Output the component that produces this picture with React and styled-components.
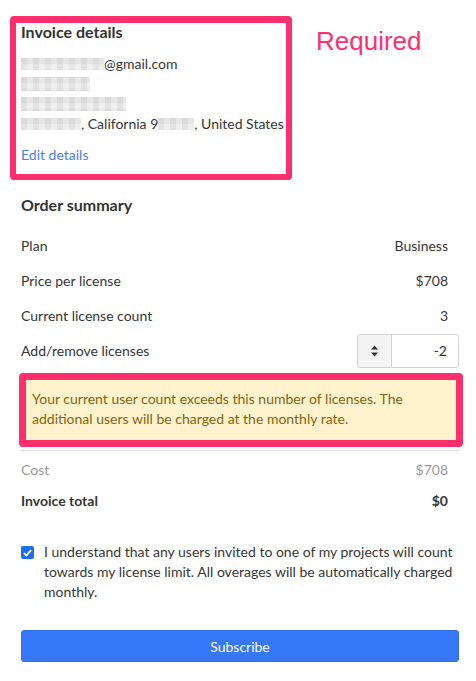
import React from "react";
import styled, { createGlobalStyle } from "styled-components";

const GlobalStyle = createGlobalStyle`
  html, body {
    margin: 0;
    padding: 0;
    background: #fff;
  }
  body {
    font-family: Lato, "Open Sans", sans-serif;
    color: #363636;
    font-size: 14px;
  }
`;

const Page = styled.div`
  width: 476px;
  box-sizing: border-box;
  padding: 16px 17px 0 21px;
`;

const TopRow = styled.div`
  display: flex;
  align-items: flex-start;
`;

const Highlight = styled.div`
  border: 6px solid #ff2f6d;
  border-top-width: 7px;
  border-radius: 4px;
  background: #fff;
`;

const InvoiceBox = styled(Highlight)`
  margin-left: -11px;
  padding: 0 0 9px 5px;
  box-sizing: content-box;
  width: 265px;
`;

const Required = styled.div`
  font-family: "Liberation Sans", Arial, sans-serif;
  font-size: 26px;
  color: #ff2f6d;
  margin: 10px 0 0 24px;
  line-height: 30px;
`;

const Title = styled.h2`
  margin: ${(p) => p.$top || 0}px 0 0;
  font-size: 16px;
  font-weight: 700;
  line-height: 22px;
  color: #333;
`;

const Lines = styled.div`
  margin-top: 11px;
  line-height: 20px;
`;

const Line = styled.div`
  display: flex;
  align-items: center;
  height: 20px;
  white-space: nowrap;
`;

const Redacted = styled.span`
  display: inline-block;
  width: ${(p) => p.$w}px;
  height: ${(p) => p.$h || 12}px;
  background-color: #e6e6e6;
  background-image:
    linear-gradient(90deg, rgba(0,0,0,0.05) 50%, transparent 50%),
    linear-gradient(0deg, rgba(255,255,255,0.35) 50%, transparent 50%);
  background-size: 12px 12px, 12px 12px;
`;

const Link = styled.a`
  display: block;
  margin-top: 11px;
  line-height: 20px;
  color: #4b7cf3;
  text-decoration: none;
`;

const Summary = styled.div`
  margin-top: 14px;
`;

const Rows = styled.div`
  margin-top: 12px;
`;

const Row = styled.div`
  display: flex;
  justify-content: space-between;
  align-items: center;
  height: ${(p) => p.$h || 35}px;
  padding-right: ${(p) => (p.$flush ? 0 : 11)}px;
  color: ${(p) => (p.$muted ? "#9a9a9a" : "#363636")};
  font-weight: ${(p) => (p.$bold ? 700 : 400)};
`;

const Stepper = styled.div`
  display: flex;
  width: 102px;
  height: 34px;
  box-sizing: border-box;
  border: 1px solid #d2d2d2;
  border-radius: 3px;
  overflow: hidden;
`;

const StepButton = styled.div`
  width: 33px;
  flex-shrink: 0;
  background: #f4f4f5;
  border-right: 1px solid #d2d2d2;
  display: flex;
  align-items: center;
  justify-content: center;
`;

const StepValue = styled.div`
  flex: 1;
  text-align: right;
  padding-right: 11px;
  line-height: 32px;
  color: #333;
`;

const AlertBox = styled(Highlight)`
  margin: 5px -4px 0 -2px;
  border-width: 7px;
  border-radius: 4px;
  background: #fff3cd;
  color: #85650f;
  line-height: 20px;
  padding: 9px 6px 11px 6px;
`;

const Divider = styled.hr`
  border: none;
  border-top: 1px solid #dcdcdc;
  margin: 3px 0 3px;
`;

const Agree = styled.label`
  display: flex;
  align-items: flex-start;
  gap: 10px;
  margin-top: 26px;
  line-height: 20px;
  color: #363636;
`;

const Check = styled.span`
  flex-shrink: 0;
  width: 13px;
  height: 13px;
  margin-top: 4px;
  border-radius: 2px;
  background: #1a6ff5;
  display: flex;
  align-items: center;
  justify-content: center;
`;

const SubscribeButton = styled.button`
  display: block;
  width: 100%;
  height: 32px;
  margin-top: 28px;
  border: 1px solid #2e6ff0;
  border-radius: 3px;
  background: #3777fa;
  color: #fff;
  font-family: Lato, "Open Sans", sans-serif;
  font-size: 14px;
`;

export default function App() {
  return (
    <>
      <GlobalStyle />
      <Page>
        <TopRow>
          <InvoiceBox>
            <Title $top={-2}>Invoice details</Title>
            <Lines>
              <Line>
                <Redacted $w={83} />@gmail.com
              </Line>
              <Line>
                <Redacted $w={69} $h={14} />
              </Line>
              <Line>
                <Redacted $w={105} $h={14} />
              </Line>
              <Line>
                <Redacted $w={60} />, California 9<Redacted $w={36} />, United States
              </Line>
            </Lines>
            <Link href="#">Edit details</Link>
          </InvoiceBox>
          <Required>Required</Required>
        </TopRow>

        <Summary>
          <Title>Order summary</Title>
          <Rows>
            <Row>
              <span>Plan</span>
              <span>Business</span>
            </Row>
            <Row>
              <span>Price per license</span>
              <span>$708</span>
            </Row>
            <Row>
              <span>Current license count</span>
              <span>3</span>
            </Row>
            <Row $flush>
              <span>Add/remove licenses</span>
              <Stepper>
                <StepButton>
                  <svg width="9" height="14" viewBox="0 0 9 14">
                    <path d="M4.5 1.5 L8 5.5 H1 Z" fill="#333" />
                    <path d="M4.5 12.5 L8 8.5 H1 Z" fill="#333" />
                  </svg>
                </StepButton>
                <StepValue>-2</StepValue>
              </Stepper>
            </Row>
          </Rows>
        </Summary>

        <AlertBox>
          Your current user count exceeds this number of licenses. The
          additional users will be charged at the monthly rate.
        </AlertBox>

        <Divider />

        <Row $h={31} $muted>
          <span>Cost</span>
          <span>$708</span>
        </Row>
        <Row $h={31} $bold>
          <span>Invoice total</span>
          <span>$0</span>
        </Row>

        <Agree>
          <Check>
            <svg width="9" height="8" viewBox="0 0 9 8">
              <path d="M1 4.2 L3.4 6.5 L8 1.2" stroke="#fff" strokeWidth="1.8" fill="none" />
            </svg>
          </Check>
          <span>
            I understand that any users invited to one of my projects will count
            towards my license limit. All overages will be automatically charged
            monthly.
          </span>
        </Agree>

        <SubscribeButton type="button">Subscribe</SubscribeButton>
      </Page>
    </>
  );
}
